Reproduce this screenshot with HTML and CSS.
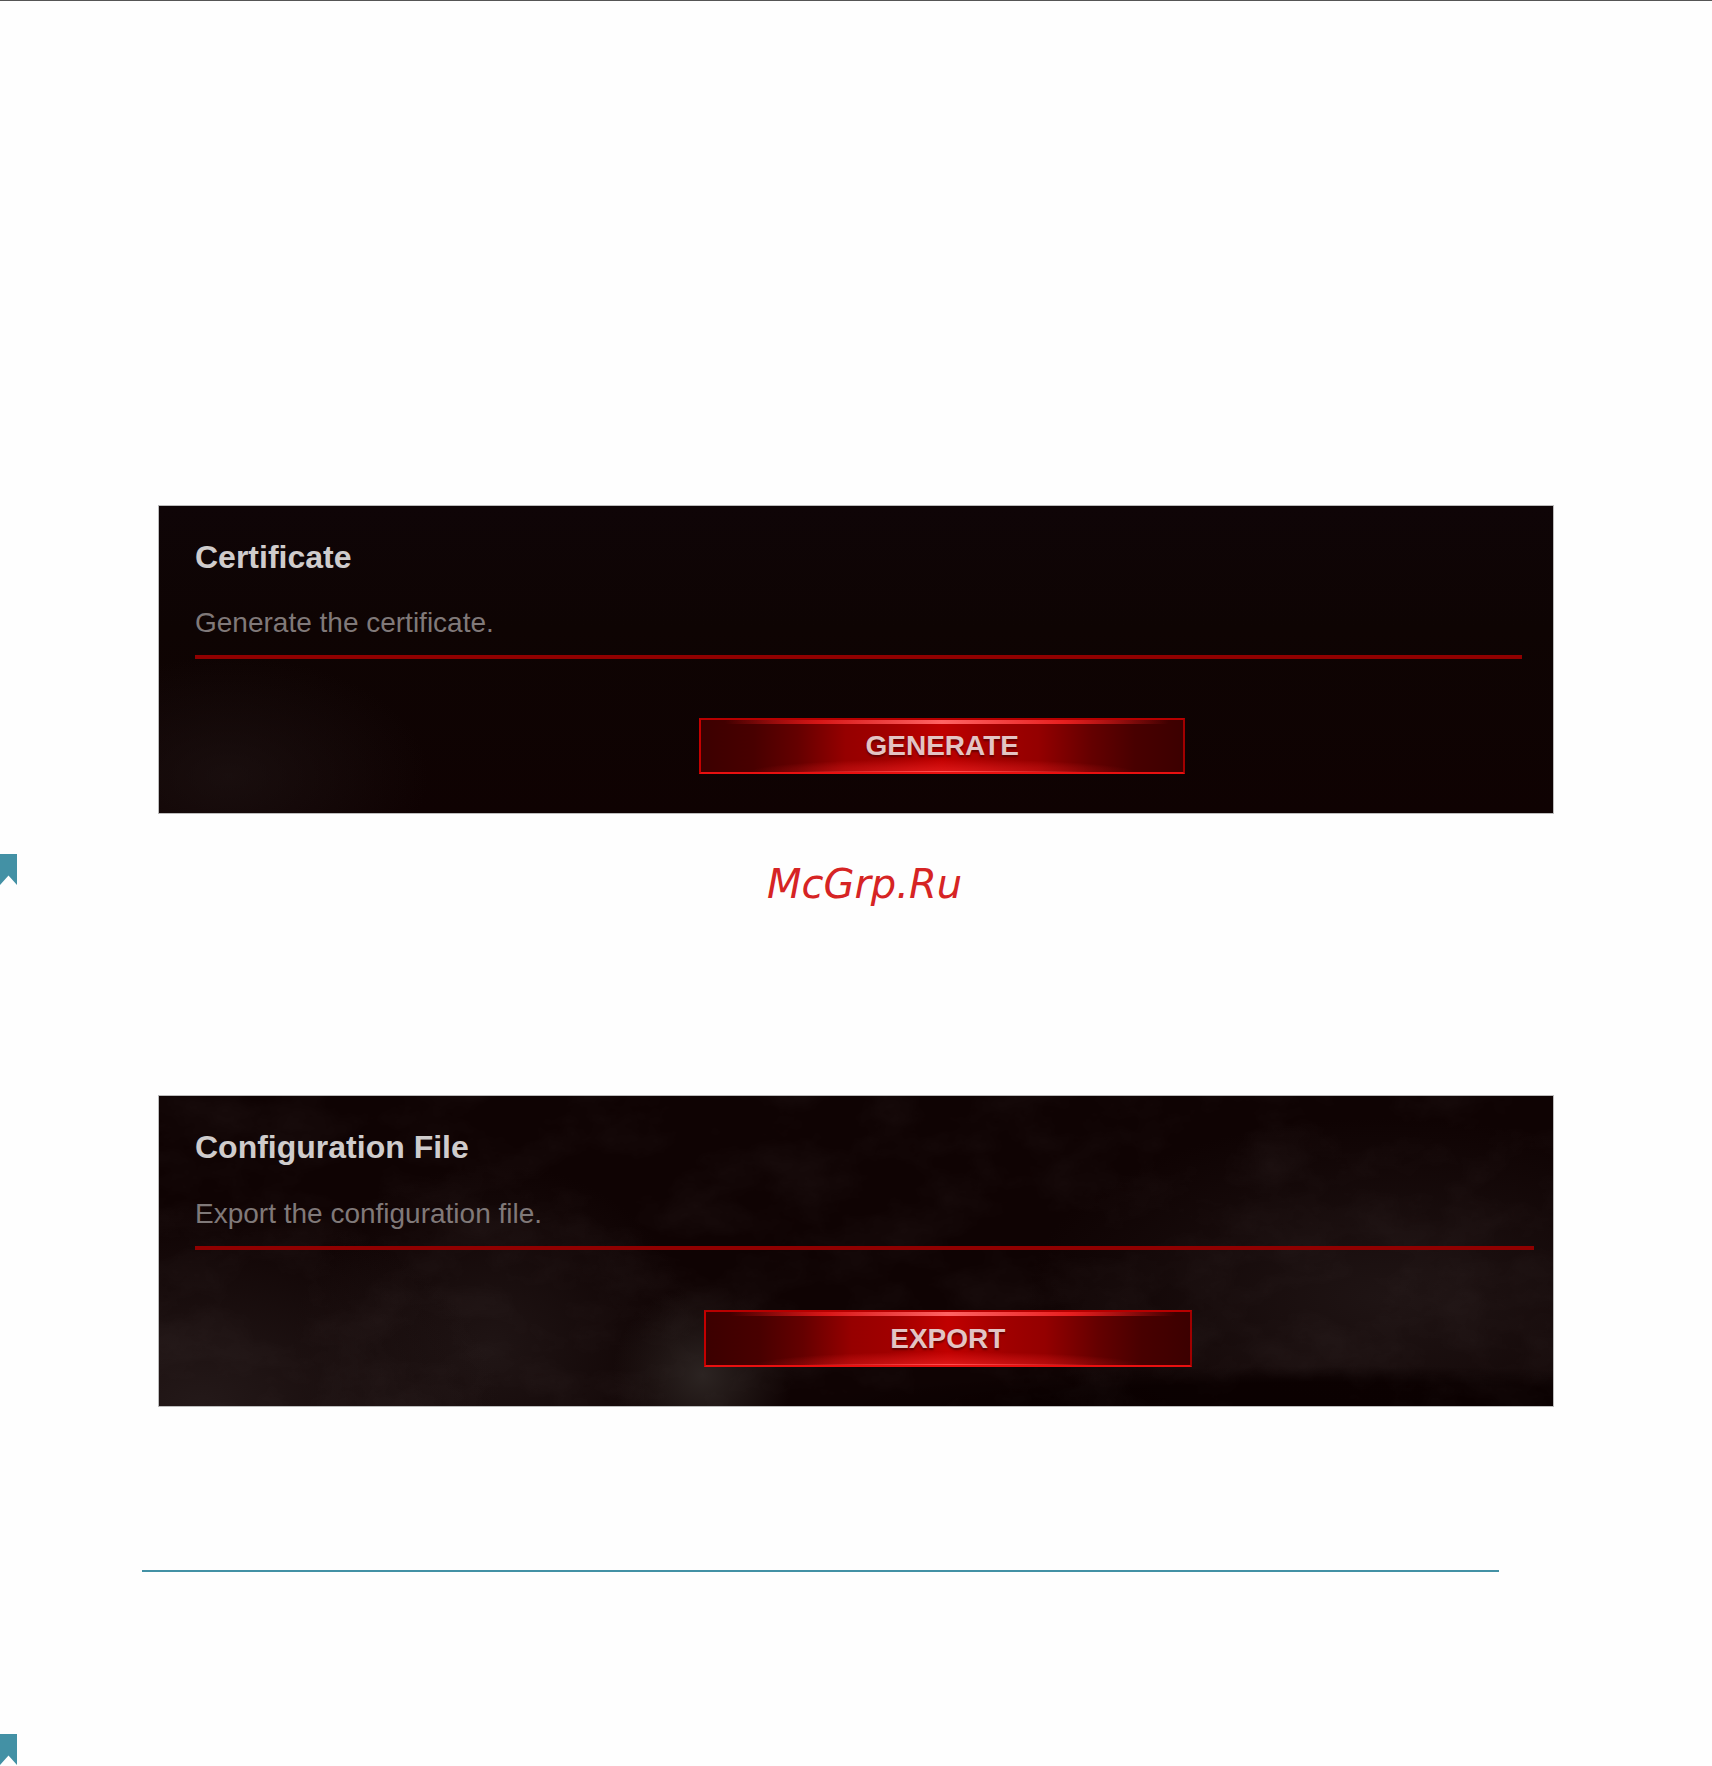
FILE: index.html
```html
<!DOCTYPE html>
<html lang="en">
<head>
	<meta charset="UTF-8">
	<title>Certificate and Configuration File</title>
	<link rel="stylesheet" href="styles.css">
</head>
<body>
	<main class="page">
		<section class="panel certificate">
			<h2>Certificate</h2>
			<p>Generate the certificate.</p>
			<hr>
			<button type="button" class="btn">GENERATE</button>
		</section>

		<div class="strip">
			<svg class="bookmark" viewBox="0 0 17 31" aria-hidden="true"><path d="M0 0H17V31L8.500 21.500L0 31Z"/></svg>
			<p class="site">McGrp.Ru</p>
		</div>

		<section class="panel config">
			<!-- smoke and scratches behind the content -->
			<svg class="dust" aria-hidden="true">
				<filter id="grain" x="0" y="0" width="100%" height="100%">
					<feTurbulence type="fractalNoise" baseFrequency="0.012 0.018" numOctaves="5" seed="8"/>
					<feColorMatrix values="0 0 0 0 0.2  0 0 0 0 0.16  0 0 0 0 0.16  1.400 0 0 0 -0.550"/>
				</filter>
				<rect width="100%" height="100%" filter="url(#grain)"/>
			</svg>
			<h2>Configuration File</h2>
			<p>Export the configuration file.</p>
			<hr>
			<button type="button" class="btn">EXPORT</button>
		</section>

		<div class="divider"></div>

		<svg class="bookmark" viewBox="0 0 17 31" aria-hidden="true"><path d="M0 0H17V31L8.500 21.500L0 31Z"/></svg>
	</main>
</body>
</html>
```

FILE: styles.css
```css
*{
	margin: 0;
	padding: 0;
	box-sizing: border-box;
}
body{
	background: #fefefe;
	border-top: 1px solid #555;
	font-family: "Liberation Sans", Arial, sans-serif;
}
.page{
	padding-top: 504px;
}
.panel{
	position: relative;
	margin: 0 158px;
	padding: 33px 31px 39px 36px;
	border: 1px solid #bcbcbc;
	background-color: #0f0303;
}
.panel h2{
	position: relative;
	font-size: 32px;
	line-height: 36px;
	color: #cfcccc;
}
.panel p{
	position: relative;
	margin-top: 32px;
	font-size: 28px;
	line-height: 32px;
	color: #807979;
}
.panel hr{
	position: relative;
	height: 4px;
	margin-top: 16px;
	border: 0;
	background: #900000;
}
.btn{
	display: block;
	position: relative;
	width: 486px;
	height: 56px;
	margin: 59px 0 0 38%;
	border: 2px solid;
	border-color: #b80000 #a00000 #e81010 #c40000;
	background:
		linear-gradient(90deg, transparent 5%, #d81818 25%, #ff6464 50%, #e82020 75%, transparent 97%) 0 0 / 100% 4px no-repeat,
		linear-gradient(90deg, transparent 20%, #ff5050 50%, transparent 80%) 0 100% / 100% 1px no-repeat,
		radial-gradient(ellipse 40% 25% at 50% 100%, rgba(230, 30, 30, .8), transparent),
		linear-gradient(90deg, #3c0000 0%, #480000 11%, #640000 20%, #960000 30%, #a00000 38%, #c00000 50%, #a00000 62%, #940000 70%, #640000 81%, #480000 90%, #3c0000 100%);
	font: bold 28px/32px "Liberation Sans", Arial, sans-serif;
	color: #e3c4c4;
	text-shadow: 0 2px 2px rgba(60, 0, 0, .6);
	cursor: pointer;
}
.certificate{
	background-image:
		radial-gradient(ellipse 200px 120px at 5% 88%, rgba(32, 22, 22, .6), transparent),
		linear-gradient(#0f0507, #0e0403 40%, #0f0202);
}
.config{
	padding-right: 19px;
	background-image:
		radial-gradient(ellipse 520px 40px at 85% 100%, rgba(10, 0, 0, .9) 60%, transparent),
		radial-gradient(ellipse 90px 90px at 39% 90%, #2c2422, transparent),
		radial-gradient(ellipse 300px 200px at 3% 100%, #241919, transparent),
		radial-gradient(ellipse 200px 180px at 24% 80%, #1f1414, transparent),
		radial-gradient(ellipse 360px 180px at 88% 65%, #1f1414, transparent);
}
.config p{
	margin-top: 33px;
}
.config .btn{
	width: 488px;
	height: 57px;
	margin-top: 60px;
}
.dust{
	position: absolute;
	top: 0;
	left: 0;
	width: 100%;
	height: 100%;
	opacity: .12;
}
.strip{
	display: flex;
	align-items: flex-start;
	margin: 40px 0 187px;
}
.site{
	flex: 1;
	padding-top: 6px;
	text-align: center;
	font: italic 40px/48px "DejaVu Sans", sans-serif;
	color: #d62424;
}
.bookmark{
	display: block;
	width: 17px;
	height: 31px;
	fill: #4391a5;
}
.divider{
	height: 2px;
	margin: 163px 213px 162px 142px;
	background: #4391a5;
}
```
